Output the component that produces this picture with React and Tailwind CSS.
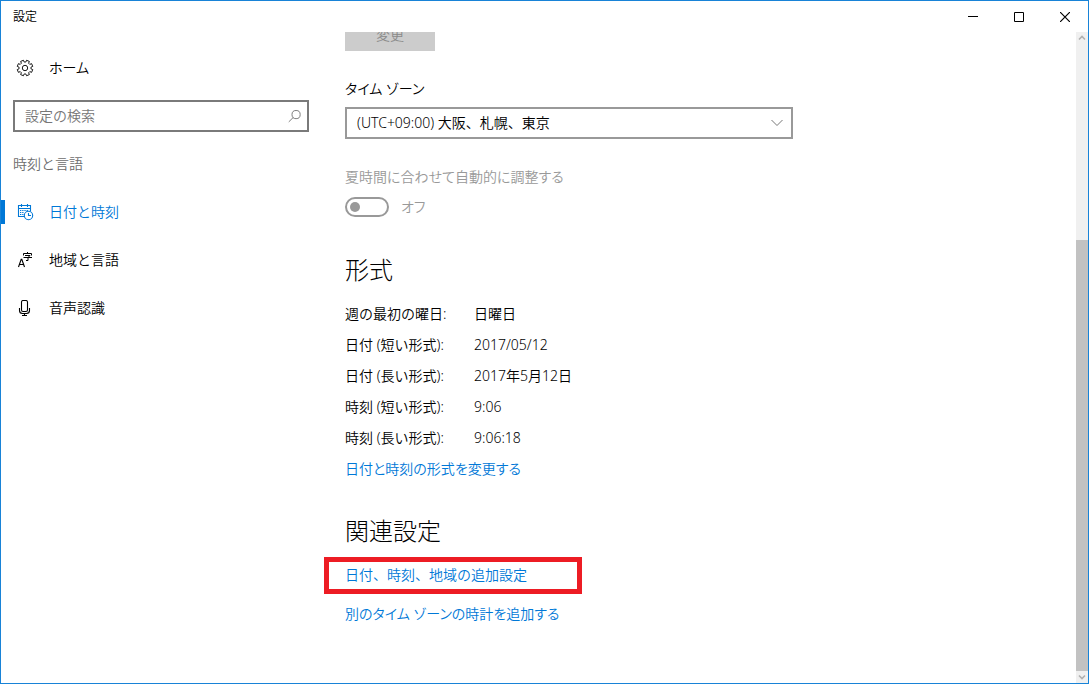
import React from 'react';

const FORMATS = [
  { label: '週の最初の曜日:', value: '日曜日' },
  { label: '日付 (短い形式):', value: '2017/05/12' },
  { label: '日付 (長い形式):', value: '2017年5月12日' },
  { label: '時刻 (短い形式):', value: '9:06' },
  { label: '時刻 (長い形式):', value: '9:06:18' },
];

// Outline of a cog with eight flat teeth, centred on 8,8
const gearPath = () => {
  const points = [];
  for (let i = 0; i < 8; i++) {
    const mid = (i * Math.PI) / 4 + Math.PI / 8;
    [[-0.26, 6], [-0.19, 7.9], [0.19, 7.9], [0.26, 6]].forEach(([offset, r]) => {
      points.push(`${(8 + r * Math.cos(mid + offset)).toFixed(2)} ${(8 + r * Math.sin(mid + offset)).toFixed(2)}`);
    });
  }
  return `M${points.join('L')}Z`;
};

const GearIcon = () => (
  <svg width="16" height="16" viewBox="0 0 16 16" className="overflow-visible" fill="none" stroke="currentColor" strokeWidth="0.9" strokeLinejoin="round" aria-hidden="true">
    <path d={gearPath()} />
    <circle cx="8" cy="8" r="2.7" />
  </svg>
);

const CalendarIcon = () => (
  <svg width="16" height="16" viewBox="0 0 16 16" className="overflow-visible" fill="none" stroke="currentColor" aria-hidden="true">
    <path d="M7 12.5H1.5v-11h12V7M1.5 4.5h12M4.5 0v3M10.5 0v3" strokeWidth="1.1" />
    <path d="M3 6.5h1.3M5.2 6.5h1.3M7.4 6.5h1.3M9.6 6.5h1.3M3 8.5h1.3M5.2 8.5h1.3M3 10.5h1.3M5.2 10.5h1.3" />
    <circle cx="11.5" cy="11.5" r="4.2" fill="white" strokeWidth="1.1" />
    <path d="M11.5 9v2.5H14" strokeWidth="1.1" />
  </svg>
);

const LanguageIcon = () => (
  <svg width="16" height="16" viewBox="0 0 16 16" fill="none" stroke="currentColor" aria-hidden="true">
    <path d="M1.5 15L4.2 7.2h.6L7.5 15M2.5 12.5h4" strokeWidth="1.1" />
    <path d="M10.5 0v1.5M6.5 3.5v-2h8v2M8 3.5h5L11 5.5v3H9M6.5 5.5h8.5" />
  </svg>
);

const MicIcon = () => (
  <svg width="16" height="16" viewBox="0 0 16 16" fill="none" stroke="currentColor" strokeWidth="1.1" aria-hidden="true">
    <rect x="4.5" y=".5" width="6" height="11" rx="1.5" />
    <path d="M2.5 8v2.5q0 3 3 3h4q3 0 3-3V8M7.5 13.5v2M5 15.5h5" />
  </svg>
);

const SearchIcon = () => (
  <svg width="14" height="14" viewBox="0 0 14 14" fill="none" stroke="currentColor" aria-hidden="true">
    <circle cx="8.5" cy="5.5" r="4.3" />
    <path d="M5.5 8.5L.8 13.2" />
  </svg>
);

const NAV_ITEMS = [
  { label: '日付と時刻', icon: CalendarIcon, active: true },
  { label: '地域と言語', icon: LanguageIcon },
  { label: '音声認識', icon: MicIcon },
];

const TitleBar = () => (
  <header className="flex h-[31px] shrink-0 items-center justify-between pl-3">
    <h1 className="text-xs">設定</h1>
    <div className="flex h-full">
      <button type="button" aria-label="最小化" className="flex w-[46px] items-center justify-center">
        <svg width="10" height="10" viewBox="0 0 10 10" stroke="currentColor"><path d="M0 4.5h10" /></svg>
      </button>
      <button type="button" aria-label="最大化" className="flex w-[46px] items-center justify-center">
        <svg width="10" height="10" viewBox="0 0 10 10" fill="none" stroke="currentColor"><path d="M.5.5h9v9h-9z" /></svg>
      </button>
      <button type="button" aria-label="閉じる" className="flex w-[46px] items-center justify-center">
        <svg width="10" height="10" viewBox="0 0 10 10" stroke="currentColor" strokeWidth="1.2"><path d="M0 0l10 10M10 0L0 10" /></svg>
      </button>
    </div>
  </header>
);

const Sidebar = () => (
  <aside className="w-[308px] shrink-0 pt-3">
    <a href="#home" className="flex h-12 items-center gap-4 pl-4 [font-feature-settings:'palt']">
      <GearIcon />
      ホーム
    </a>
    <div className="mt-2 ml-3 flex h-8 items-center border-2 border-[#7a7a7a] pr-1.5 pl-2.5 text-[#767676]">
      <input
        type="search"
        aria-label="設定の検索"
        placeholder="設定の検索"
        className="w-full min-w-0 bg-transparent outline-none placeholder:text-[#767676]"
      />
      <SearchIcon />
    </div>
    <h2 className="mt-2 flex h-12 items-center pl-3 text-[#6d6d6d]">時刻と言語</h2>
    <nav>
      {NAV_ITEMS.map(({ label, icon: Icon, active }) => (
        <a
          key={label}
          href="#section"
          aria-current={active ? 'page' : undefined}
          className={active ? 'flex h-12 items-center text-[#0078d7]' : 'flex h-12 items-center'}
        >
          <span className={active ? 'mr-3 h-6 w-1 bg-[#0078d7]' : 'mr-3 h-6 w-1'} />
          <Icon />
          <span className="ml-4">{label}</span>
        </a>
      ))}
    </nav>
  </aside>
);

const Scrollbar = () => (
  <div className="flex w-3 shrink-0 flex-col bg-[#f0f0f0] text-[#b0b0b0]">
    <button type="button" aria-label="上へスクロール" className="flex h-3 items-center justify-center">
      <svg width="8" height="6" viewBox="0 0 8 6" fill="none" stroke="currentColor" strokeWidth="1.6"><path d="M1 4.5l3-3 3 3" /></svg>
    </button>
    <div className="grow-[196]" />
    <div className="grow-[431] bg-[#c2c2c2]" />
    <button type="button" aria-label="下へスクロール" className="flex h-3 items-center justify-center">
      <svg width="8" height="6" viewBox="0 0 8 6" fill="none" stroke="currentColor" strokeWidth="1.6"><path d="M1 1.5l3 3 3-3" /></svg>
    </button>
  </div>
);

const Content = () => (
  <main className="min-w-0 flex-1 overflow-hidden pl-9">
    {/* Scrolled so that the button is partly under the title bar */}
    <button type="button" disabled className="-mt-[13px] block h-8 w-[90px] bg-[#cccccc] text-[#8a8a8a]">
      変更
    </button>

    <label htmlFor="timezone" className="mt-7 block [font-feature-settings:'palt']">タイム ゾーン</label>
    <div className="relative mt-2 max-w-[448px]">
      <select
        id="timezone"
        className="block h-8 w-full appearance-none border-2 border-[#999999] bg-white pr-8 pl-2.5 outline-none"
      >
        <option>(UTC+09:00) 大阪、札幌、東京</option>
      </select>
      <svg className="pointer-events-none absolute top-3 right-2.5 text-[#767676]" width="12" height="8" viewBox="0 0 12 8" fill="none" stroke="currentColor">
        <path d="M.5 1L6 6.5 11.5 1" />
      </svg>
    </div>

    <label htmlFor="dst" className="mt-7 block text-[#999999] [font-feature-settings:'palt']">夏時間に合わせて自動的に調整する</label>
    <div className="mt-2.5 flex items-center gap-3 text-[#999999] [font-feature-settings:'palt']">
      <input
        id="dst"
        type="checkbox"
        role="switch"
        disabled
        className="flex h-5 w-11 appearance-none items-center rounded-full border-2 border-[#999999] pl-[3px] before:size-2.5 before:rounded-full before:bg-[#999999]"
      />
      <span>オフ</span>
    </div>

    <h2 className="mt-[37px] text-2xl font-light">形式</h2>
    <dl className="mt-3">
      {FORMATS.map(({ label, value }) => (
        <div key={label} className="flex h-[31px] items-center">
          <dt className="w-[129px]">{label}</dt>
          <dd>{value}</dd>
        </div>
      ))}
    </dl>
    <a href="#formats" className="flex h-[31px] items-center text-[#0078d7] [font-feature-settings:'palt']">日付と時刻の形式を変更する</a>

    <h2 className="mt-[31px] text-2xl font-light">関連設定</h2>
    <div className="mt-2.5 -ml-[21px] flex h-[37px] w-[258px] items-center border-[5px] border-[#ed1c24] pb-0.5 pl-4 text-[#0078d7]">
      <a href="#additional">日付、時刻、地域の追加設定</a>
    </div>
    <a href="#clocks" className="mt-2.5 block text-[#0078d7] [font-feature-settings:'palt']">別のタイム ゾーンの時計を追加する</a>
  </main>
);

const App = () => (
  <div className="flex h-screen flex-col overflow-hidden border border-[#1883d7] bg-white font-['Noto_Sans','Noto_Sans_CJK_JP',sans-serif] text-sm leading-5 font-[350] text-black">
    <TitleBar />
    <div className="flex min-h-0 flex-1">
      <Sidebar />
      <Content />
      <Scrollbar />
    </div>
  </div>
);

export default App;
